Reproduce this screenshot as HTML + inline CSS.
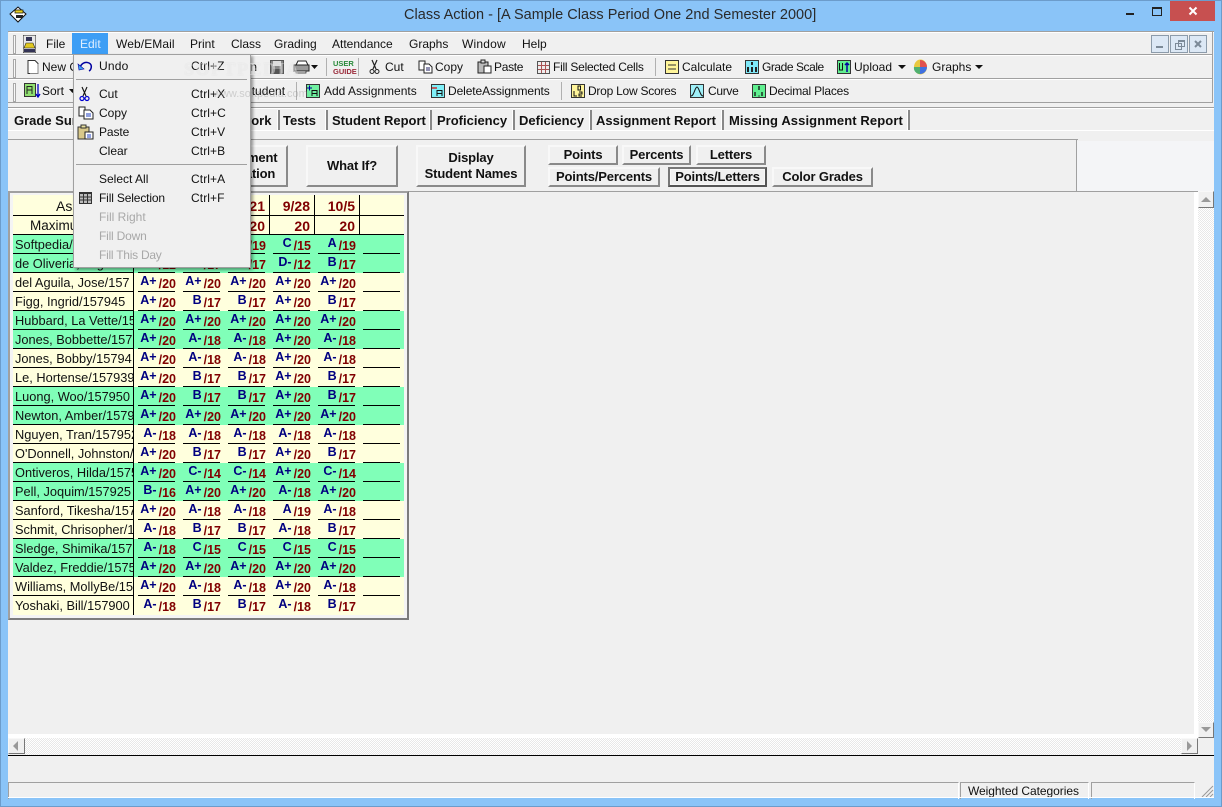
<!DOCTYPE html>
<html><head><meta charset="utf-8"><title>Class Action</title>
<style>
html,body{margin:0;padding:0}
body{width:1222px;height:807px;position:relative;overflow:hidden;background:#8AC4F8;font:12px/16px "Liberation Sans",sans-serif;color:#111}
div,span,svg{position:absolute}
.t{white-space:nowrap}
.l{position:absolute;background:#a0a0a0}
.w{position:absolute;background:#fff}
.k{position:absolute;background:#000}
.tab{font-weight:bold;font-size:13px;color:#111;white-space:nowrap;top:113px}
.sep{top:110px;width:2px;height:20px;background:#888;border-left:1px solid #fff}
.bt{background:#f0f0f0;border:2px solid;border-color:#f8f8f8 #8a8a8a #8a8a8a #f8f8f8;box-sizing:border-box;font-weight:bold;font-size:13px;letter-spacing:-.15px;text-align:center;color:#111;line-height:16px;display:flex;align-items:center;justify-content:center}
.gr{height:17px;background:#f8f8f8;border:1px solid #a8a8a8;left:13px;width:1px}
.v{width:1px;height:18px;background:#b0b0b0}
.r{position:absolute;left:13px;width:391px;height:19px;background-color:#FFFFDD;background-image:linear-gradient(#000,#000),linear-gradient(#000,#000),linear-gradient(#000,#000),linear-gradient(#000,#000),linear-gradient(#000,#000),linear-gradient(#000,#000),linear-gradient(#000,#000);background-repeat:no-repeat;background-size:120px 1px,37px 1px,37px 1px,37px 1px,37px 1px,37px 1px,37px 1px;background-position:0 18px,125px 18px,170px 18px,215px 18px,260px 18px,305px 18px,350px 18px}
.g{background-color:#80FFB8}
.r>u{position:absolute;left:2px;top:0;width:118px;overflow:hidden;white-space:nowrap;text-decoration:none;font-size:12.8px;line-height:20px;color:#111}
.r>s{position:absolute;text-decoration:none;top:0;width:46px;text-align:right;line-height:23px;white-space:nowrap}
.r>s:nth-of-type(1){left:117px}.r>s:nth-of-type(2){left:162px}.r>s:nth-of-type(3){left:207px}.r>s:nth-of-type(4){left:252px}.r>s:nth-of-type(5){left:297px}
.r b{position:relative;top:-3px;color:#000080;font-size:12.5px;margin-right:2px}
.r i{font-style:normal;font-weight:bold;font-size:12.5px;color:#800000}
.h{font-weight:bold;font-size:14px;color:#800000;white-space:nowrap}
.sb{background:#f0f0f0;border:1px solid;border-color:#f8f8f8 #777 #777 #f8f8f8;box-sizing:border-box}
.dis{color:#a8a8a8}
</style></head><body>
<div style="left:0;top:0;width:1220px;height:805px;border:1px solid #6C9CCB"></div>

<svg style="left:9px;top:5px" width="20" height="20" viewBox="0 0 20 20"><path d="M1 9L9 2 17 9 9 17Z" fill="#fff" stroke="#111"/><path d="M6 5h8v3H6z" fill="#e8d020" stroke="#111" stroke-width=".7"/><path d="M7 10h7v3H7z" fill="#222"/></svg>
<div class="t" style="left:404px;top:7px;font-size:14.5px;line-height:17px;letter-spacing:.02px;color:#2a2a2a">Class Action - [A Sample Class Period One 2nd Semester 2000]</div>
<div style="left:1126px;top:13px;width:8px;height:2px;background:#222"></div>
<div style="left:1152px;top:7px;width:8px;height:6px;border:1px solid #222;border-top:2px solid #222"></div>
<div style="left:1170px;top:1px;width:45px;height:20px;background:#C75050"></div>
<svg style="left:1188px;top:6px" width="10" height="10" viewBox="0 0 10 10"><path d="M1.5 1.5L8.5 8.5M8.5 1.5L1.5 8.5" stroke="#fff" stroke-width="2"/></svg>

<!-- client -->
<div style="left:8px;top:31px;width:1206px;height:767px;background:#F0F0F0"></div>
<div class="l" style="left:8px;top:31px;width:1206px;height:1px"></div>
<div class="w" style="left:9px;top:32px;width:1205px;height:1px"></div>
<div class="l" style="left:8px;top:54px;width:1204px;height:1px"></div>
<div class="w" style="left:8px;top:55px;width:1204px;height:1px"></div>
<div class="l" style="left:8px;top:78px;width:1204px;height:1px"></div>
<div class="w" style="left:8px;top:79px;width:1204px;height:1px"></div>
<div class="l" style="left:8px;top:102px;width:1204px;height:1px"></div>
<div class="l" style="left:8px;top:107px;width:1206px;height:1px"></div>
<div class="w" style="left:8px;top:108px;width:1206px;height:1px"></div>
<div class="w" style="left:8px;top:130px;width:1206px;height:1px"></div>
<div class="l" style="left:1212px;top:32px;width:1px;height:71px"></div>

<div class="gr" style="top:35px"></div><div class="gr" style="top:59px"></div><div class="gr" style="top:83px"></div>

<!-- menu bar -->
<svg style="left:23px;top:35px" width="13" height="18" viewBox="0 0 13 18"><rect width="13" height="18" fill="#e8e8e8" stroke="#222"/><path d="M3 2h6v4H3z" fill="#335"/><path d="M3 8h7l2 5H1z" fill="#e0c820" stroke="#222" stroke-width=".6"/><path d="M1 14h11v3H1z" fill="#335"/></svg>
<div style="left:72px;top:33px;width:36px;height:21px;background:#3D9EF5"></div>
<div class="t" style="left:46px;top:36px">File</div>
<div class="t" style="left:80px;top:36px;color:#dfeeff">Edit</div>
<div class="t" style="left:116px;top:36px;letter-spacing:.1px">Web/EMail</div>
<div class="t" style="left:190px;top:36px">Print</div>
<div class="t" style="left:231px;top:36px">Class</div>
<div class="t" style="left:274px;top:36px">Grading</div>
<div class="t" style="left:332px;top:36px">Attendance</div>
<div class="t" style="left:409px;top:36px">Graphs</div>
<div class="t" style="left:462px;top:36px;letter-spacing:.2px">Window</div>
<div class="t" style="left:522px;top:36px">Help</div>
<div style="left:1151px;top:35px;width:18px;height:18px;box-sizing:border-box;background:#DCE8F5;border:1px solid #8C9BAA"></div>
<div style="left:1156px;top:46px;width:7px;height:2px;background:#7C8A98"></div>
<div style="left:1170px;top:35px;width:18px;height:18px;box-sizing:border-box;background:#DCE8F5;border:1px solid #8C9BAA"></div>
<div style="left:1175px;top:43px;width:5px;height:5px;border:1px solid #7C8A98"></div>
<div style="left:1178px;top:40px;width:5px;height:4px;border:1px solid #7C8A98;border-top-width:2px"></div>
<div style="left:1189px;top:35px;width:18px;height:18px;box-sizing:border-box;background:#DCE8F5;border:1px solid #8C9BAA"></div>
<svg style="left:1194px;top:40px" width="8" height="8" viewBox="0 0 8 8"><path d="M1 1L7 7M7 1L1 7" stroke="#7C8A98" stroke-width="2"/></svg>

<!-- toolbar 1 -->
<svg style="left:27px;top:60px" width="12" height="14" viewBox="0 0 12 14"><path d="M1 .5h7l3 3v10H1z" fill="#fff" stroke="#333"/><path d="M11 4v9.500H3" fill="none" stroke="#888"/></svg>
<div class="t" style="left:42px;top:59px">New Class</div>
<div class="t" style="left:200px;top:59px;width:57px;text-align:right">Open</div>
<svg style="left:270px;top:60px" width="14" height="14" viewBox="0 0 14 14"><rect x=".5" y=".5" width="13" height="13" fill="#888" stroke="#555"/><rect x="3" y="1" width="8" height="5" fill="#ddd"/><rect x="3" y="9" width="8" height="4" fill="#555"/></svg>
<svg style="left:293px;top:60px" width="26" height="14" viewBox="0 0 26 14"><path d="M5 1h8l2 4H3z" fill="#fff" stroke="#222"/><path d="M1 5h15v6H1z" fill="#999" stroke="#222"/><path d="M3 11h10v2H3z" fill="#eee" stroke="#222" stroke-width=".7"/><path d="M18 5h7l-3.500 4z" fill="#111"/></svg>
<div class="v" style="left:326px;top:58px"></div>
<div style="left:333px;top:60px;width:19px;height:15px;font:bold 7.500px/7.500px 'Liberation Sans',sans-serif;text-align:center"><span style="position:static;color:#2a8a3a;display:block">USER</span><span style="position:static;color:#9a2a3a;display:block">GUIDE</span></div>
<div class="v" style="left:358px;top:58px"></div>
<svg style="left:369px;top:59px" width="11" height="16" viewBox="0 0 11 16"><path d="M3 1l4 9M8 1L4 10" stroke="#222" stroke-width="1.200" fill="none"/><circle cx="3" cy="12.500" r="2" fill="none" stroke="#222"/><circle cx="8" cy="12.500" r="2" fill="none" stroke="#222"/></svg>
<div class="t" style="left:385px;top:59px">Cut</div>
<svg style="left:418px;top:60px" width="15" height="14" viewBox="0 0 15 14"><path d="M1 1h6v9H1z" fill="#fff" stroke="#222"/><path d="M6 4h5l3 3v6H6z" fill="#fff" stroke="#222"/><path d="M8 8h4M8 10h4" stroke="#226" /></svg>
<div class="t" style="left:435px;top:59px">Copy</div>
<svg style="left:477px;top:59px" width="15" height="15" viewBox="0 0 15 15"><path d="M1 3h10v11H1z" fill="#bbb" stroke="#222"/><rect x="4" y="1" width="4" height="3" fill="#ddd" stroke="#222"/><path d="M7 7h7v7H7z" fill="#fff" stroke="#222"/></svg>
<div class="t" style="left:494px;top:59px;letter-spacing:-.3px">Paste</div>
<svg style="left:537px;top:61px" width="13" height="13" viewBox="0 0 13 13"><rect x=".5" y=".5" width="12" height="12" fill="#eee" stroke="#555"/><path d="M4.500 1v11M8.500 1v11M1 4.500h11M1 8.500h11" stroke="#a55"/></svg>
<div class="t" style="left:553px;top:59px;letter-spacing:-.25px">Fill Selected Cells</div>
<div class="v" style="left:655px;top:58px"></div>
<svg style="left:665px;top:60px" width="14" height="14" viewBox="0 0 14 14"><rect x=".5" y=".5" width="13" height="13" fill="#FFF59A" stroke="#333"/><path d="M3 5h8M3 9h8" stroke="#333"/></svg>
<div class="t" style="left:682px;top:59px">Calculate</div>
<svg style="left:745px;top:60px" width="14" height="14" viewBox="0 0 14 14"><rect x=".5" y=".5" width="13" height="13" fill="#7FE8F8" stroke="#333"/><path d="M6 2h2v3H6zM2 7h2v5H2zM6 7h2v5H6zM10 7h2v5h-2z" fill="#222"/></svg>
<div class="t" style="left:762px;top:59px;letter-spacing:-.45px">Grade Scale</div>
<svg style="left:837px;top:60px" width="14" height="14" viewBox="0 0 14 14"><rect x=".5" y=".5" width="13" height="13" fill="#60F090" stroke="#333"/><path d="M2.500 3v7h3V3" fill="none" stroke="#111"/><path d="M10 12V3M8 5l2-2 2 2" fill="none" stroke="#0000a0" stroke-width="1.500"/></svg>
<div class="t" style="left:854px;top:59px">Upload</div>
<svg style="left:898px;top:65px" width="8" height="5"><path d="M0 0h8L4 4z" fill="#111"/></svg>
<svg style="left:913px;top:59px" width="15" height="16" viewBox="0 0 15 16"><ellipse cx="7.500" cy="8" rx="6.500" ry="7.500" fill="#e8c840"/><path d="M7 1a7 7 0 0 1 7 7H7z" fill="#e05050"/><path d="M7 8h7a7 7 0 0 1-7 7z" fill="#4070e0"/><path d="M1 8a6 6 0 0 0 6 7V8z" fill="#50b070"/></svg>
<div class="t" style="left:932px;top:59px">Graphs</div>
<svg style="left:975px;top:65px" width="8" height="5"><path d="M0 0h8L4 4z" fill="#111"/></svg>

<!-- toolbar 2 -->
<svg style="left:24px;top:83px" width="17" height="15" viewBox="0 0 17 15"><rect x=".5" y=".5" width="11" height="13" fill="#90E070" stroke="#333"/><path d="M3 11V3.500h5V11M3 7h5" fill="none" stroke="#222"/><path d="M14 1v12M12 11l2 3 2-3" fill="none" stroke="#0000c0" stroke-width="1.300"/></svg>
<div class="t" style="left:42px;top:83px">Sort</div>
<svg style="left:69px;top:89px" width="7" height="5"><path d="M0 0h7L3.500 4z" fill="#111"/></svg>
<div class="t" style="left:219px;top:83px">Add Student</div>
<div class="v" style="left:296px;top:82px"></div>
<svg style="left:306px;top:84px" width="14" height="14" viewBox="0 0 14 14"><rect x=".5" y=".5" width="13" height="13" fill="#70F0A0" stroke="#333"/><path d="M1 4h5M3.500 1.500v5" stroke="#0000a0"/><path d="M6 12V6.500h5V12M6 9.500h5" fill="none" stroke="#111"/></svg>
<div class="t" style="left:324px;top:83px">Add Assignments</div>
<svg style="left:431px;top:84px" width="14" height="14" viewBox="0 0 14 14"><rect x=".5" y=".5" width="13" height="13" fill="#7FF0F8" stroke="#333"/><path d="M1 4h5" stroke="#d00" stroke-width="1.200"/><path d="M6 12V6.500h5V12M6 9.500h5" fill="none" stroke="#111"/></svg>
<div class="t" style="left:448px;top:83px;letter-spacing:-.1px">DeleteAssignments</div>
<div class="v" style="left:561px;top:82px"></div>
<svg style="left:571px;top:84px" width="14" height="14" viewBox="0 0 14 14"><rect x=".5" y=".5" width="13" height="13" fill="#FFF59A" stroke="#333"/><path d="M3 7v5h3M7 2h2.500v4H7zM8 8h3v2H8v2h3" fill="none" stroke="#111"/></svg>
<div class="t" style="left:588px;top:83px;letter-spacing:-.25px">Drop Low Scores</div>
<svg style="left:690px;top:84px" width="14" height="14" viewBox="0 0 14 14"><rect x=".5" y=".5" width="13" height="13" fill="#9FF0F8" stroke="#333"/><path d="M1 12C4 12 5 3 7 3s3 9 6 9" fill="none" stroke="#111"/></svg>
<div class="t" style="left:708px;top:83px;letter-spacing:-.3px">Curve</div>
<svg style="left:752px;top:84px" width="14" height="14" viewBox="0 0 14 14"><rect x=".5" y=".5" width="13" height="13" fill="#60F090" stroke="#333"/><path d="M7 2v4M3 8v4M10 8v4M6.500 12h1" stroke="#111" stroke-width="1.300"/></svg>
<div class="t" style="left:769px;top:83px;letter-spacing:-.2px">Decimal Places</div>

<!-- tabs -->
<div class="t tab" style="left:14px">Grade Summary</div>
<div class="t tab" style="left:205px">Homework</div>
<div class="sep" style="left:277px"></div>
<div class="t tab" style="left:283px">Tests</div>
<div class="sep" style="left:325px"></div>
<div class="t tab" style="left:332px">Student Report</div>
<div class="sep" style="left:429px"></div>
<div class="t tab" style="left:437px">Proficiency</div>
<div class="sep" style="left:512px"></div>
<div class="t tab" style="left:519px">Deficiency</div>
<div class="sep" style="left:589px"></div>
<div class="t tab" style="left:596px">Assignment Report</div>
<div class="sep" style="left:721px"></div>
<div class="t tab" style="left:729px;letter-spacing:.1px">Missing Assignment Report</div>
<div class="sep" style="left:907px"></div>

<!-- panel -->
<div class="l" style="left:8px;top:139px;width:1070px;height:1px"></div>
<div class="l" style="left:1076px;top:140px;width:1px;height:51px"></div>
<div style="left:1077px;top:141px;width:137px;height:50px;background:#F4F5F7"></div>
<div class="l" style="left:8px;top:191px;width:1206px;height:1px"></div>

<div class="bt" style="left:190px;top:145px;width:98px;height:42px;padding-left:4px">Assignment<br>Calculation</div>
<div class="bt" style="left:306px;top:145px;width:92px;height:42px">What If?</div>
<div class="bt" style="left:416px;top:145px;width:110px;height:42px">Display<br>Student Names</div>
<div class="bt" style="left:548px;top:145px;width:70px;height:20px">Points</div>
<div class="bt" style="left:622px;top:145px;width:69px;height:20px">Percents</div>
<div class="bt" style="left:696px;top:145px;width:70px;height:20px">Letters</div>
<div class="bt" style="left:548px;top:167px;width:112px;height:20px">Points/Percents</div>
<div class="bt" style="left:668px;top:167px;width:99px;height:20px;border-color:#777 #555 #555 #777;box-shadow:inset 0 0 0 1px #f8f8f8">Points/Letters</div>
<div class="bt" style="left:772px;top:167px;width:101px;height:20px">Color Grades</div>

<!-- grid -->
<div style="left:8px;top:191px;width:401px;height:429px;box-sizing:border-box;background:#f4f4f4;border:2px solid;border-color:#a0a0a0 #7c7c7c #7c7c7c #a0a0a0"></div>
<div style="left:13px;top:195px;width:391px;height:420px;background:#FFFFDD"></div>
<div class="t" style="left:56px;top:198px;font-size:14px">Assignment</div>
<div class="t" style="left:30px;top:218px;font-size:13.5px">Maximum Points</div>
<div class="k" style="left:13px;top:215px;width:391px;height:1px"></div>
<div class="k" style="left:224px;top:195px;width:1px;height:40px"></div>
<div class="k" style="left:269px;top:195px;width:1px;height:40px"></div>
<div class="k" style="left:314px;top:195px;width:1px;height:40px"></div>
<div class="k" style="left:359px;top:195px;width:1px;height:40px"></div>
<div class="t h" style="left:229px;top:198px;width:36px;text-align:right">9/21</div>
<div class="t h" style="left:274px;top:198px;width:36px;text-align:right">9/28</div>
<div class="t h" style="left:319px;top:198px;width:36px;text-align:right">10/5</div>
<div class="t h" style="left:229px;top:218px;width:36px;text-align:right">20</div>
<div class="t h" style="left:274px;top:218px;width:36px;text-align:right">20</div>
<div class="t h" style="left:319px;top:218px;width:36px;text-align:right">20</div>
<div class="k" style="left:13px;top:234px;width:391px;height:1px"></div>

<div class="r g" style="top:235px"><u>Softpedia/157900</u><s><b>A</b><i>/19</i></s><s><b>A</b><i>/19</i></s><s><b>A</b><i>/19</i></s><s><b>C</b><i>/15</i></s><s><b>A</b><i>/19</i></s></div>
<div class="r g" style="top:254px"><u>de Oliveria, Miguel/157</u><s><b>D-</b><i>/12</i></s><s><b>B</b><i>/17</i></s><s><b>B</b><i>/17</i></s><s><b>D-</b><i>/12</i></s><s><b>B</b><i>/17</i></s></div>
<div class="r" style="top:273px"><u>del Aguila, Jose/157</u><s><b>A+</b><i>/20</i></s><s><b>A+</b><i>/20</i></s><s><b>A+</b><i>/20</i></s><s><b>A+</b><i>/20</i></s><s><b>A+</b><i>/20</i></s></div>
<div class="r" style="top:292px"><u>Figg, Ingrid/157945</u><s><b>A+</b><i>/20</i></s><s><b>B</b><i>/17</i></s><s><b>B</b><i>/17</i></s><s><b>A+</b><i>/20</i></s><s><b>B</b><i>/17</i></s></div>
<div class="r g" style="top:311px"><u>Hubbard, La Vette/15</u><s><b>A+</b><i>/20</i></s><s><b>A+</b><i>/20</i></s><s><b>A+</b><i>/20</i></s><s><b>A+</b><i>/20</i></s><s><b>A+</b><i>/20</i></s></div>
<div class="r g" style="top:330px"><u>Jones, Bobbette/157</u><s><b>A+</b><i>/20</i></s><s><b>A-</b><i>/18</i></s><s><b>A-</b><i>/18</i></s><s><b>A+</b><i>/20</i></s><s><b>A-</b><i>/18</i></s></div>
<div class="r" style="top:349px"><u>Jones, Bobby/15794</u><s><b>A+</b><i>/20</i></s><s><b>A-</b><i>/18</i></s><s><b>A-</b><i>/18</i></s><s><b>A+</b><i>/20</i></s><s><b>A-</b><i>/18</i></s></div>
<div class="r" style="top:368px"><u>Le, Hortense/157939</u><s><b>A+</b><i>/20</i></s><s><b>B</b><i>/17</i></s><s><b>B</b><i>/17</i></s><s><b>A+</b><i>/20</i></s><s><b>B</b><i>/17</i></s></div>
<div class="r g" style="top:387px"><u>Luong, Woo/157950</u><s><b>A+</b><i>/20</i></s><s><b>B</b><i>/17</i></s><s><b>B</b><i>/17</i></s><s><b>A+</b><i>/20</i></s><s><b>B</b><i>/17</i></s></div>
<div class="r g" style="top:406px"><u>Newton, Amber/1579</u><s><b>A+</b><i>/20</i></s><s><b>A+</b><i>/20</i></s><s><b>A+</b><i>/20</i></s><s><b>A+</b><i>/20</i></s><s><b>A+</b><i>/20</i></s></div>
<div class="r" style="top:425px"><u>Nguyen, Tran/157952</u><s><b>A-</b><i>/18</i></s><s><b>A-</b><i>/18</i></s><s><b>A-</b><i>/18</i></s><s><b>A-</b><i>/18</i></s><s><b>A-</b><i>/18</i></s></div>
<div class="r" style="top:444px"><u>O'Donnell, Johnston/</u><s><b>A+</b><i>/20</i></s><s><b>B</b><i>/17</i></s><s><b>B</b><i>/17</i></s><s><b>A+</b><i>/20</i></s><s><b>B</b><i>/17</i></s></div>
<div class="r g" style="top:463px"><u>Ontiveros, Hilda/1575</u><s><b>A+</b><i>/20</i></s><s><b>C-</b><i>/14</i></s><s><b>C-</b><i>/14</i></s><s><b>A+</b><i>/20</i></s><s><b>C-</b><i>/14</i></s></div>
<div class="r g" style="top:482px"><u>Pell, Joquim/157925</u><s><b>B-</b><i>/16</i></s><s><b>A+</b><i>/20</i></s><s><b>A+</b><i>/20</i></s><s><b>A-</b><i>/18</i></s><s><b>A+</b><i>/20</i></s></div>
<div class="r" style="top:501px"><u>Sanford, Tikesha/157</u><s><b>A+</b><i>/20</i></s><s><b>A-</b><i>/18</i></s><s><b>A-</b><i>/18</i></s><s><b>A</b><i>/19</i></s><s><b>A-</b><i>/18</i></s></div>
<div class="r" style="top:520px"><u>Schmit, Chrisopher/1</u><s><b>A-</b><i>/18</i></s><s><b>B</b><i>/17</i></s><s><b>B</b><i>/17</i></s><s><b>A-</b><i>/18</i></s><s><b>B</b><i>/17</i></s></div>
<div class="r g" style="top:539px"><u>Sledge, Shimika/157</u><s><b>A-</b><i>/18</i></s><s><b>C</b><i>/15</i></s><s><b>C</b><i>/15</i></s><s><b>C</b><i>/15</i></s><s><b>C</b><i>/15</i></s></div>
<div class="r g" style="top:558px"><u>Valdez, Freddie/1575</u><s><b>A+</b><i>/20</i></s><s><b>A+</b><i>/20</i></s><s><b>A+</b><i>/20</i></s><s><b>A+</b><i>/20</i></s><s><b>A+</b><i>/20</i></s></div>
<div class="r" style="top:577px"><u>Williams, MollyBe/15</u><s><b>A+</b><i>/20</i></s><s><b>A-</b><i>/18</i></s><s><b>A-</b><i>/18</i></s><s><b>A+</b><i>/20</i></s><s><b>A-</b><i>/18</i></s></div>
<div class="r" style="top:596px;background-image:none"><u>Yoshaki, Bill/157900</u><s><b>A-</b><i>/18</i></s><s><b>B</b><i>/17</i></s><s><b>B</b><i>/17</i></s><s><b>A-</b><i>/18</i></s><s><b>B</b><i>/17</i></s></div>
<div class="k" style="left:133px;top:235px;width:1px;height:380px"></div>

<!-- scrollbars -->
<div class="w" style="left:1194px;top:192px;width:4px;height:546px"></div>
<div style="left:1198px;top:208px;width:16px;height:514px;background:repeating-conic-gradient(#fff 0 25%,#e8e8e8 0 50%) 0 0/2px 2px"></div>
<div class="sb" style="left:1198px;top:191px;width:16px;height:17px"></div>
<svg style="left:1201px;top:197px" width="10" height="6"><path d="M5 0l5 5H0z" fill="#999"/></svg>
<div class="sb" style="left:1198px;top:722px;width:16px;height:16px"></div>
<svg style="left:1201px;top:727px" width="10" height="6"><path d="M0 0h10L5 5z" fill="#999"/></svg>
<div class="w" style="left:8px;top:734px;width:1190px;height:4px"></div>
<div style="left:25px;top:738px;width:1156px;height:17px;background:repeating-conic-gradient(#fff 0 25%,#e8e8e8 0 50%) 0 0/2px 2px"></div>
<div class="sb" style="left:8px;top:738px;width:17px;height:16px"></div>
<svg style="left:13px;top:741px" width="6" height="10"><path d="M5 0v10L0 5z" fill="#999"/></svg>
<div class="sb" style="left:1181px;top:738px;width:17px;height:16px"></div>
<svg style="left:1187px;top:741px" width="6" height="10"><path d="M0 0v10l5-5z" fill="#999"/></svg>
<div class="k" style="left:8px;top:755px;width:1206px;height:1px"></div>

<!-- status bar -->
<div style="left:8px;top:782px;width:949px;height:16px;border-top:1px solid #a0a0a0;border-left:1px solid #a0a0a0;border-right:1px solid #fff"></div>
<div style="left:960px;top:782px;width:127px;height:16px;border-top:1px solid #a0a0a0;border-left:1px solid #a0a0a0;border-right:1px solid #fff"></div>
<div style="left:1091px;top:782px;width:102px;height:16px;border-top:1px solid #a0a0a0;border-left:1px solid #a0a0a0;border-right:1px solid #fff"></div>
<div class="t" style="left:968px;top:783px;letter-spacing:-.05px">Weighted Categories</div>
<svg style="left:1201px;top:785px" width="13" height="13" viewBox="0 0 13 13"><path d="M12 1L1 12M12 5L5 12M12 9L9 12" stroke="#999"/></svg>
<div class="w" style="left:8px;top:797px;width:1206px;height:1px"></div>

<!-- edit menu -->
<div style="left:73px;top:54px;width:178px;height:214px;box-sizing:border-box;background:#F0F0F0;border:1px solid #A0A0A0;box-shadow:2px 2px 3px rgba(0,0,0,.4)"></div>
<svg style="left:77px;top:60px" width="16" height="12" viewBox="0 0 16 12"><path d="M3 9C3 4 8 1 12 3s2 7 0 8" fill="none" stroke="#0000a0" stroke-width="1.500"/><path d="M1 4l1 6 5-1z" fill="#40a0f0" stroke="#0000a0" stroke-width=".6"/></svg>
<div class="t" style="left:99px;top:58px;letter-spacing:.2px">Undo</div><div class="t" style="left:191px;top:58px;letter-spacing:.1px">Ctrl+Z</div>
<div class="l" style="left:76px;top:79px;width:171px;height:1px"></div>
<svg style="left:79px;top:86px" width="11" height="16" viewBox="0 0 11 16"><path d="M3 1l4 9M8 1L4 10" stroke="#111" stroke-width="1.100" fill="none"/><circle cx="3" cy="12.500" r="2" fill="none" stroke="#0000d0" stroke-width="1.200"/><circle cx="8" cy="12.500" r="2" fill="none" stroke="#0000d0" stroke-width="1.200"/></svg>
<div class="t" style="left:99px;top:86px">Cut</div><div class="t" style="left:191px;top:86px;letter-spacing:.1px">Ctrl+X</div>
<svg style="left:78px;top:106px" width="16" height="14" viewBox="0 0 16 14"><path d="M1 1h6v9H1z" fill="#fff" stroke="#222"/><path d="M6 4h6l3 3v6H6z" fill="#fff" stroke="#222"/><path d="M8 8h5M8 10h5" stroke="#2040c0"/></svg>
<div class="t" style="left:99px;top:105px">Copy</div><div class="t" style="left:191px;top:105px;letter-spacing:.1px">Ctrl+C</div>
<svg style="left:77px;top:124px" width="17" height="16" viewBox="0 0 17 16"><path d="M1 3h11v12H1z" fill="#d8c88a" stroke="#333"/><rect x="4" y="1" width="5" height="3" fill="#e8e0a0" stroke="#333"/><path d="M8 8h8v7H8z" fill="#fff" stroke="#222"/><path d="M10 11h4M10 13h4" stroke="#2040c0"/></svg>
<div class="t" style="left:99px;top:124px;letter-spacing:-.1px">Paste</div><div class="t" style="left:191px;top:124px;letter-spacing:.1px">Ctrl+V</div>
<div class="t" style="left:99px;top:143px">Clear</div><div class="t" style="left:191px;top:143px;letter-spacing:.1px">Ctrl+B</div>
<div class="l" style="left:76px;top:164px;width:171px;height:1px"></div>
<div class="t" style="left:99px;top:171px">Select All</div><div class="t" style="left:191px;top:171px;letter-spacing:.1px">Ctrl+A</div>
<svg style="left:79px;top:192px" width="13" height="12" viewBox="0 0 13 12"><rect width="13" height="12" fill="#333"/><rect x="1" y="2" width="11" height="9" fill="#bbb"/><path d="M4.500 2v9M8.500 2v9M1 5h11M1 8h11" stroke="#333"/></svg>
<div class="t" style="left:99px;top:190px;letter-spacing:-.15px">Fill Selection</div><div class="t" style="left:191px;top:190px;letter-spacing:.1px">Ctrl+F</div>
<div class="t dis" style="left:99px;top:209px">Fill Right</div>
<div class="t dis" style="left:99px;top:228px;letter-spacing:-.2px">Fill Down</div>
<div class="t dis" style="left:99px;top:247px;letter-spacing:-.25px">Fill This Day</div>

<!-- watermark -->
<div class="t" style="left:184px;top:59px;font:bold 18px/20px 'Liberation Serif',serif;letter-spacing:1.500px;color:rgba(255,255,255,.4);text-shadow:0 0 1px rgba(150,150,150,.2)">SOFTPEDIA</div>
<div class="t" style="left:213px;top:86px;font-size:11px;color:rgba(140,140,140,.35)">www.softpedia.com</div>
</body></html>
